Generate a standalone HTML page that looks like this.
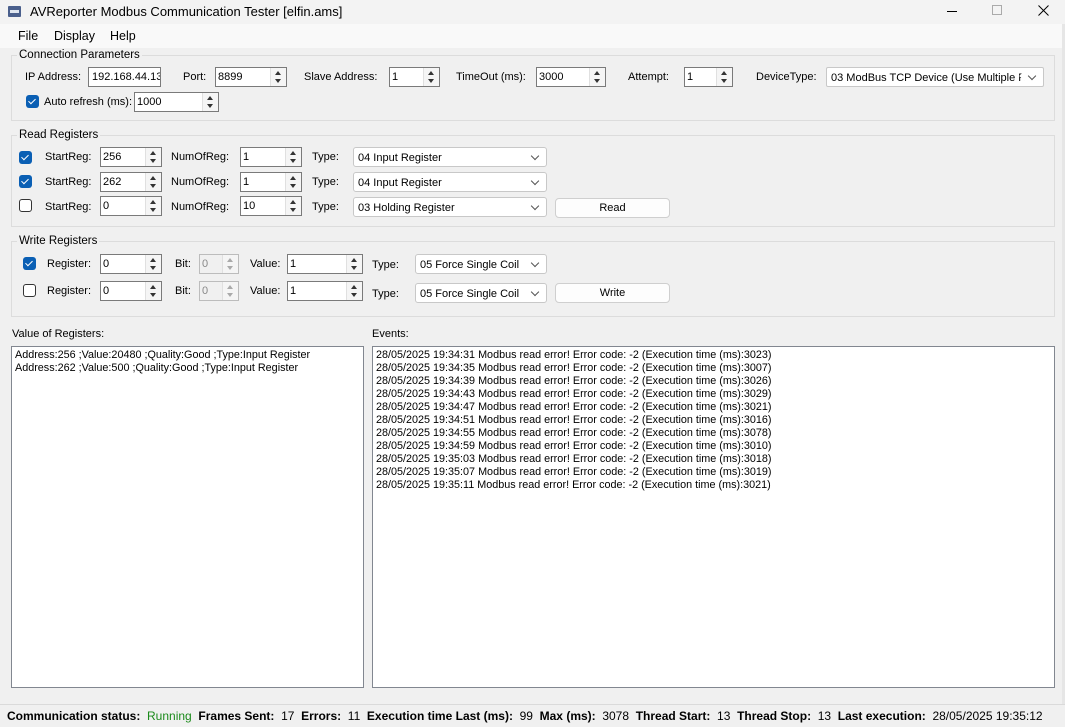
<!DOCTYPE html>
<html><head><meta charset="utf-8"><style>
*{box-sizing:border-box;margin:0;padding:0}
body{width:1065px;height:727px;background:#f0f0f0;font-family:"Liberation Sans",Arial,sans-serif;font-size:11px;color:#000;position:relative;overflow:hidden}
.a{position:absolute;white-space:nowrap}
.grp{position:absolute;border:1px solid #dcdcdc;}
.gl{position:absolute;background:#f0f0f0;padding:0 2px;font-size:11.5px}
.tb{position:absolute;background:#fff;border:1px solid #7a7a7a;height:20px;padding:3px 3px;font-size:11px;overflow:hidden}
.sp{position:absolute;background:#fff;border:1px solid #7a7a7a;height:20px;font-size:11px}
.sp span{position:absolute;left:2px;top:3px}
.sp i{position:absolute;right:0;top:0;width:16px;height:18px;border-left:1px solid #e0e0e0;background:#f5f5f5}
.sp i:before{content:"";position:absolute;left:4px;top:3px;border:3.5px solid transparent;border-bottom:4px solid #333;border-top:0}
.sp i:after{content:"";position:absolute;left:4px;top:11px;border:3.5px solid transparent;border-top:4px solid #333;border-bottom:0}
.sp.dis{background:#f0f0f0;border-color:#bcbcbc;color:#888}
.sp.dis i:before{border-bottom-color:#aaa}.sp.dis i:after{border-top-color:#aaa}
.cb{position:absolute;background:#fff;border:1px solid #c8c8c8;border-radius:3px;height:20px;font-size:11px}
.cb span{position:absolute;left:4px;top:4px}
.cb i{position:absolute;right:8px;top:5px;width:6px;height:6px;border-right:1px solid #555;border-bottom:1px solid #555;transform:rotate(45deg);background:#fff}
.chk{position:absolute;width:13px;height:13px;border-radius:3px}
.chk.on{background:#0a5fb4}
.chk.on:after{content:"";position:absolute;left:4px;top:2px;width:3px;height:6px;border-right:1.3px solid #fff;border-bottom:1.3px solid #fff;transform:rotate(45deg)}
.chk.off{border:1px solid #333;background:#fff}
.btn{position:absolute;background:#fdfdfd;border:1px solid #cfcfcf;border-radius:4px;height:20px;text-align:center;line-height:18px;font-size:11px}
.lst{position:absolute;background:#fff;border:1px solid #828790;font-size:10.8px;line-height:13px;padding:2px 3px}
.st b{font-weight:bold}
</style></head><body>
<div class="a" style="left:0;top:0;width:1065px;height:24px;background:#f3f3f3"></div>
<div class="a" style="left:8px;top:6px;width:13px;height:11px;background:#4a5f8c;border-radius:1px"></div>
<div class="a" style="left:10px;top:10px;width:9px;height:3px;background:#dfe6f0"></div>
<div class="a" style="left:30px;top:4px;font-size:13px">AVReporter Modbus Communication Tester [elfin.ams]</div>
<div class="a" style="left:947px;top:11px;width:10px;height:1px;background:#000"></div>
<div class="a" style="left:992px;top:5px;width:10px;height:10px;border:1px solid #aaa"></div>
<svg class="a" style="left:1038px;top:5px" width="11" height="11"><path d="M0.5 0.5L10.5 10.5M10.5 0.5L0.5 10.5" stroke="#000" stroke-width="1"/></svg>
<div class="a" style="left:0;top:24px;width:1065px;height:24px;background:#f9f9f9"></div>
<div class="a" style="left:18px;top:29px;font-size:12.5px">File</div>
<div class="a" style="left:54px;top:29px;font-size:12.5px">Display</div>
<div class="a" style="left:110px;top:29px;font-size:12.5px">Help</div>
<div class="a" style="left:1062px;top:24px;width:3px;height:680px;background:#e6e6e6"></div>

<div class="grp" style="left:11px;top:55px;width:1044px;height:66px"></div>
<div class="gl" style="left:17px;top:49px">Connection Parameters</div>
<div class="a" style="left:25px;top:71px">IP Address:</div>
<div class="tb" style="left:88px;top:67px;width:73px">192.168.44.134</div>
<div class="a" style="left:183px;top:71px">Port:</div>
<div class="sp" style="left:215px;top:67px;width:72px"><span>8899</span><i></i></div>
<div class="a" style="left:304px;top:71px">Slave Address:</div>
<div class="sp" style="left:389px;top:67px;width:51px"><span>1</span><i></i></div>
<div class="a" style="left:456px;top:71px">TimeOut (ms):</div>
<div class="sp" style="left:536px;top:67px;width:70px"><span>3000</span><i></i></div>
<div class="a" style="left:628px;top:71px">Attempt:</div>
<div class="sp" style="left:684px;top:67px;width:49px"><span>1</span><i></i></div>
<div class="a" style="left:756px;top:71px">DeviceType:</div>
<div class="cb" style="left:826px;top:67px;width:218px;overflow:hidden;border-radius:2px"><span>03 ModBus TCP Device (Use Multiple Re</span><i style="box-shadow:0 0 0 6px #fff"></i></div>
<div class="chk on" style="left:26px;top:95px"></div>
<div class="a" style="left:44px;top:96px">Auto refresh (ms):</div>
<div class="sp" style="left:134px;top:92px;width:85px"><span>1000</span><i></i></div>

<div class="grp" style="left:11px;top:135px;width:1044px;height:92px"></div>
<div class="gl" style="left:17px;top:129px">Read Registers</div>
<div class="chk on" style="left:19px;top:151px"></div>
<div class="a" style="left:45px;top:151px">StartReg:</div>
<div class="sp" style="left:100px;top:147px;width:62px"><span>256</span><i></i></div>
<div class="a" style="left:171px;top:151px">NumOfReg:</div>
<div class="sp" style="left:240px;top:147px;width:62px"><span>1</span><i></i></div>
<div class="a" style="left:312px;top:151px">Type:</div>
<div class="cb" style="left:353px;top:147px;width:194px"><span>04 Input Register</span><i></i></div>

<div class="chk on" style="left:19px;top:175px"></div>
<div class="a" style="left:45px;top:176px">StartReg:</div>
<div class="sp" style="left:100px;top:172px;width:62px"><span>262</span><i></i></div>
<div class="a" style="left:171px;top:176px">NumOfReg:</div>
<div class="sp" style="left:240px;top:172px;width:62px"><span>1</span><i></i></div>
<div class="a" style="left:312px;top:176px">Type:</div>
<div class="cb" style="left:353px;top:172px;width:194px"><span>04 Input Register</span><i></i></div>

<div class="chk off" style="left:19px;top:199px"></div>
<div class="a" style="left:45px;top:201px">StartReg:</div>
<div class="sp" style="left:100px;top:196px;width:62px"><span>0</span><i></i></div>
<div class="a" style="left:171px;top:201px">NumOfReg:</div>
<div class="sp" style="left:240px;top:196px;width:62px"><span>10</span><i></i></div>
<div class="a" style="left:312px;top:201px">Type:</div>
<div class="cb" style="left:353px;top:197px;width:194px"><span>03 Holding Register</span><i></i></div>
<div class="btn" style="left:555px;top:198px;width:115px">Read</div>

<div class="grp" style="left:11px;top:241px;width:1044px;height:76px"></div>
<div class="gl" style="left:17px;top:235px">Write Registers</div>
<div class="chk on" style="left:23px;top:257px"></div>
<div class="a" style="left:47px;top:258px">Register:</div>
<div class="sp" style="left:100px;top:254px;width:62px"><span>0</span><i></i></div>
<div class="a" style="left:175px;top:258px">Bit:</div>
<div class="sp dis" style="left:199px;top:254px;width:40px"><span>0</span><i></i></div>
<div class="a" style="left:250px;top:258px">Value:</div>
<div class="sp" style="left:287px;top:254px;width:76px"><span>1</span><i></i></div>
<div class="a" style="left:372px;top:259px">Type:</div>
<div class="cb" style="left:415px;top:254px;width:132px"><span>05 Force Single Coil</span><i></i></div>

<div class="chk off" style="left:23px;top:284px"></div>
<div class="a" style="left:47px;top:285px">Register:</div>
<div class="sp" style="left:100px;top:281px;width:62px"><span>0</span><i></i></div>
<div class="a" style="left:175px;top:285px">Bit:</div>
<div class="sp dis" style="left:199px;top:281px;width:40px"><span>0</span><i></i></div>
<div class="a" style="left:250px;top:285px">Value:</div>
<div class="sp" style="left:287px;top:281px;width:76px"><span>1</span><i></i></div>
<div class="a" style="left:372px;top:288px">Type:</div>
<div class="cb" style="left:415px;top:283px;width:132px"><span>05 Force Single Coil</span><i></i></div>
<div class="btn" style="left:555px;top:283px;width:115px">Write</div>

<div class="a" style="left:12px;top:328px;font-size:11px">Value of Registers:</div>
<div class="a" style="left:372px;top:328px;font-size:11px">Events:</div>
<div class="lst" style="left:11px;top:346px;width:353px;height:342px">Address:256 ;Value:20480 ;Quality:Good ;Type:Input Register<br>Address:262 ;Value:500 ;Quality:Good ;Type:Input Register</div>
<div class="lst" style="left:372px;top:346px;width:683px;height:342px">28/05/2025 19:34:31 Modbus read error! Error code: -2 (Execution time (ms):3023)<br>28/05/2025 19:34:35 Modbus read error! Error code: -2 (Execution time (ms):3007)<br>28/05/2025 19:34:39 Modbus read error! Error code: -2 (Execution time (ms):3026)<br>28/05/2025 19:34:43 Modbus read error! Error code: -2 (Execution time (ms):3029)<br>28/05/2025 19:34:47 Modbus read error! Error code: -2 (Execution time (ms):3021)<br>28/05/2025 19:34:51 Modbus read error! Error code: -2 (Execution time (ms):3016)<br>28/05/2025 19:34:55 Modbus read error! Error code: -2 (Execution time (ms):3078)<br>28/05/2025 19:34:59 Modbus read error! Error code: -2 (Execution time (ms):3010)<br>28/05/2025 19:35:03 Modbus read error! Error code: -2 (Execution time (ms):3018)<br>28/05/2025 19:35:07 Modbus read error! Error code: -2 (Execution time (ms):3019)<br>28/05/2025 19:35:11 Modbus read error! Error code: -2 (Execution time (ms):3021)</div>

<div class="a" style="left:0;top:704px;width:1065px;height:1px;background:#dadada"></div>
<div class="a st" style="left:7px;top:709px;font-size:12px"><b>Communication status:</b>&nbsp; <span style="color:#1a8a1a">Running</span>&nbsp; <b>Frames Sent:</b>&nbsp; 17&nbsp; <b>Errors:</b>&nbsp; 11&nbsp; <b>Execution time Last (ms):</b>&nbsp; 99&nbsp; <b>Max (ms):</b>&nbsp; 3078&nbsp; <b>Thread Start:</b>&nbsp; 13&nbsp; <b>Thread Stop:</b>&nbsp; 13&nbsp; <b>Last execution:</b>&nbsp; 28/05/2025 19:35:12</div>
</body></html>
